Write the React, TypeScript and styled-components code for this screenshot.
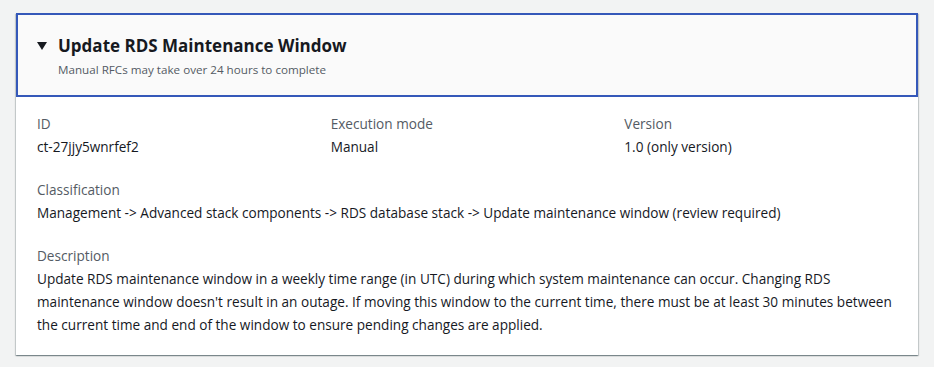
import React from 'react';
import styled, { createGlobalStyle } from 'styled-components';

const GlobalStyle = createGlobalStyle`
  body {
    margin: 0;
    background: #f2f3f3;
    font-family: "Open Sans", "Noto Sans", Arial, sans-serif;
    color: #16191f;
  }
`;

interface Field {
  label: string;
  value: string;
}

const summary: Field[] = [
  { label: 'ID', value: 'ct-27jjy5wnrfef2' },
  { label: 'Execution mode', value: 'Manual' },
  { label: 'Version', value: '1.0 (only version)' },
];

const App: React.FC = () => {
  return (
    <Page>
      <GlobalStyle />
      <Card>
        <Header>
          <TitleRow>
            <Caret viewBox="0 0 10 8" aria-hidden="true">
              <path d="M0 0 H10 L5 8 Z" fill="#16191f" />
            </Caret>
            <Title>Update RDS Maintenance Window</Title>
          </TitleRow>
          <Subtitle>Manual RFCs may take over 24 hours to complete</Subtitle>
        </Header>
        <Body>
          <Columns>
            {summary.map(f => (
              <div key={f.label}>
                <Label>{f.label}</Label>
                <Value>{f.value}</Value>
              </div>
            ))}
          </Columns>
          <div>
            <Label>Classification</Label>
            <Value>
              Management -&gt; Advanced stack components -&gt; RDS database stack -&gt; Update
              maintenance window (review required)
            </Value>
          </div>
          <div>
            <Label>Description</Label>
            <Value>
              Update RDS maintenance window in a weekly time range (in UTC) during which system
              maintenance can occur. Changing RDS maintenance window doesn't result in an outage. If
              moving this window to the current time, there must be at least 30 minutes between the
              current time and end of the window to ensure pending changes are applied.
            </Value>
          </div>
        </Body>
      </Card>
    </Page>
  );
};

const Page = styled.div`
  padding: 13px 16px 12px 16px;
  width: 902px;
`;

const Card = styled.div`
  background: #fff;
  box-shadow: 0 1px 1px 0 rgba(0, 28, 36, 0.3), 1px 1px 1px 0 rgba(0, 28, 36, 0.15),
    -1px 1px 1px 0 rgba(0, 28, 36, 0.15);
`;

const Header = styled.div`
  background: #fafafa;
  border: 2px solid #3558b9;
  padding: 20px 20px 17px 19px;
`;

const TitleRow = styled.div`
  display: flex;
  align-items: center;
  gap: 11px;
`;

const Caret = styled.svg`
  width: 10px;
  height: 8px;
`;

const Title = styled.h2`
  margin: 0;
  font-size: 17px;
  line-height: 22px;
  font-weight: 700;
  color: #16191f;
`;

const Subtitle = styled.div`
  margin-top: 5px;
  padding-left: 21px;
  font-size: 11.65px;
  line-height: 16px;
  color: #545b64;
`;

const Body = styled.div`
  padding: 16px 20px 19px 21px;
  display: flex;
  flex-direction: column;
  gap: 21px;
`;

const Columns = styled.div`
  display: grid;
  grid-template-columns: repeat(3, 1fr);
  column-gap: 20px;
`;

const Label = styled.div`
  font-size: 13.6px;
  line-height: 22px;
  color: #545b64;
`;

const Value = styled.div`
  font-size: 13.6px;
  line-height: 23px;
  color: #16191f;
`;

export default App;
